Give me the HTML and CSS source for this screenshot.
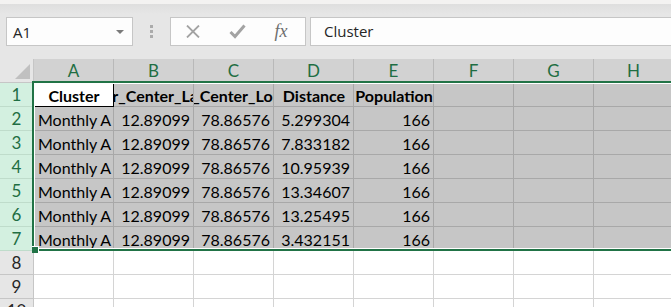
FILE: index.html
```html
<!DOCTYPE html>
<html lang="en">
<head>
    <meta charset="UTF-8">
    <meta name="viewport" content="width=device-width, initial-scale=1.0">
    <title>Cluster sheet</title>
    <link rel="stylesheet" href="styles.css">
</head>
<body>
    <div class="ribbon-edge"></div>

    <div class="formula-bar">
        <div class="name-box">
            <span>A1</span>
            <span class="drop-arrow"></span>
        </div>
        <div class="grip">
            <span></span><span></span><span></span>
        </div>
        <div class="fx-buttons">
            <span class="fx-slot">
                <svg width="14" height="13" viewBox="0 0 14 13"><path d="M1 0.5 L13 12.5 M13 0.5 L1 12.5" stroke="#a3a3a3" stroke-width="1.8" fill="none"/></svg>
            </span>
            <span class="fx-slot">
                <svg width="17" height="15" viewBox="0 0 17 15"><path d="M1.5 8 L6 12.5 L15.5 1.5" stroke="#a3a3a3" stroke-width="3" fill="none"/></svg>
            </span>
            <span class="fx-slot fx-text">fx</span>
        </div>
        <div class="formula-input">Cluster</div>
    </div>

    <div class="sheet">
        <div class="corner"><span class="corner-tri"></span></div>
        <div class="col-head">A</div>
        <div class="col-head">B</div>
        <div class="col-head">C</div>
        <div class="col-head">D</div>
        <div class="col-head">E</div>
        <div class="col-head">F</div>
        <div class="col-head">G</div>
        <div class="col-head">H</div>

        <div class="row-head sel">1</div>
        <div class="cell active head-cell"><span>Cluster</span></div>
        <div class="cell sel head-cell"><span>Cluster_Center_Latitude</span></div>
        <div class="cell sel head-cell"><span>Cluster_Center_Longitude</span></div>
        <div class="cell sel head-cell"><span>Distance</span></div>
        <div class="cell sel head-cell"><span>Population</span></div>
        <div class="cell sel"></div>
        <div class="cell sel"></div>
        <div class="cell sel"></div>

        <div class="row-head sel">2</div>
        <div class="cell sel">Monthly A</div>
        <div class="cell sel num">12.89099</div>
        <div class="cell sel num">78.86576</div>
        <div class="cell sel num">5.299304</div>
        <div class="cell sel num">166</div>
        <div class="cell sel"></div>
        <div class="cell sel"></div>
        <div class="cell sel"></div>

        <div class="row-head sel">3</div>
        <div class="cell sel">Monthly A</div>
        <div class="cell sel num">12.89099</div>
        <div class="cell sel num">78.86576</div>
        <div class="cell sel num">7.833182</div>
        <div class="cell sel num">166</div>
        <div class="cell sel"></div>
        <div class="cell sel"></div>
        <div class="cell sel"></div>

        <div class="row-head sel">4</div>
        <div class="cell sel">Monthly A</div>
        <div class="cell sel num">12.89099</div>
        <div class="cell sel num">78.86576</div>
        <div class="cell sel num">10.95939</div>
        <div class="cell sel num">166</div>
        <div class="cell sel"></div>
        <div class="cell sel"></div>
        <div class="cell sel"></div>

        <div class="row-head sel">5</div>
        <div class="cell sel">Monthly A</div>
        <div class="cell sel num">12.89099</div>
        <div class="cell sel num">78.86576</div>
        <div class="cell sel num">13.34607</div>
        <div class="cell sel num">166</div>
        <div class="cell sel"></div>
        <div class="cell sel"></div>
        <div class="cell sel"></div>

        <div class="row-head sel">6</div>
        <div class="cell sel">Monthly A</div>
        <div class="cell sel num">12.89099</div>
        <div class="cell sel num">78.86576</div>
        <div class="cell sel num">13.25495</div>
        <div class="cell sel num">166</div>
        <div class="cell sel"></div>
        <div class="cell sel"></div>
        <div class="cell sel"></div>

        <div class="row-head sel">7</div>
        <div class="cell sel">Monthly A</div>
        <div class="cell sel num">12.89099</div>
        <div class="cell sel num">78.86576</div>
        <div class="cell sel num">3.432151</div>
        <div class="cell sel num">166</div>
        <div class="cell sel"></div>
        <div class="cell sel"></div>
        <div class="cell sel"></div>

        <div class="row-head">8</div>
        <div class="cell"></div><div class="cell"></div><div class="cell"></div><div class="cell"></div>
        <div class="cell"></div><div class="cell"></div><div class="cell"></div><div class="cell"></div>

        <div class="row-head">9</div>
        <div class="cell"></div><div class="cell"></div><div class="cell"></div><div class="cell"></div>
        <div class="cell"></div><div class="cell"></div><div class="cell"></div><div class="cell"></div>

        <div class="row-head">10</div>
        <div class="cell"></div><div class="cell"></div><div class="cell"></div><div class="cell"></div>
        <div class="cell"></div><div class="cell"></div><div class="cell"></div><div class="cell"></div>

        <!-- selection frame lies over the cells -->
        <div class="selection">
            <span class="fill-handle"></span>
        </div>
    </div>
</body>
</html>
```

FILE: styles.css
```css
body {
    margin: 0;
    width: 671px;
    height: 307px;
    overflow: hidden;
    background-color: #ffffff;
    font-family: Lato, "Liberation Sans", sans-serif;
}

.ribbon-edge {
    height: 4px;
    background-color: #f3f2f1;
}

.formula-bar {
    height: 55px;
    box-sizing: border-box;
    padding-top: 13px;
    display: flex;
    align-items: flex-start;
    background: linear-gradient(#dedede, #e6e6e6 10px);
    font-family: "Open Sans", "Noto Sans", sans-serif;
}

.name-box {
    margin-left: 6px;
    width: 127px;
    height: 29px;
    box-sizing: border-box;
    border: 1px solid #c6c6c6;
    background-color: #fdfdfd;
    display: flex;
    align-items: center;
    justify-content: space-between;
    padding: 0 8px 0 6px;
    font-size: 15px;
    color: #262626;
}

.drop-arrow {
    width: 0;
    height: 0;
    border-left: 4px solid transparent;
    border-right: 4px solid transparent;
    border-top: 4px solid #7a7a7a;
}

.grip {
    width: 37px;
    height: 29px;
    display: flex;
    flex-direction: column;
    align-items: center;
    justify-content: center;
    gap: 2px;
}

.grip span {
    width: 3px;
    height: 3px;
    background-color: #ababab;
}

.fx-buttons {
    width: 136px;
    height: 29px;
    box-sizing: border-box;
    border: 1px solid #c6c6c6;
    background-color: #fdfdfd;
    display: flex;
    align-items: center;
}

.fx-slot {
    width: 44px;
    display: flex;
    justify-content: center;
    align-items: center;
}

.fx-text {
    font-family: "Liberation Serif", serif;
    font-style: italic;
    font-size: 18px;
    color: #6e6e6e;
}

.formula-input {
    flex: 1;
    margin-left: 4px;
    margin-right: -2px;
    height: 29px;
    box-sizing: border-box;
    border: 1px solid #c6c6c6;
    background-color: #fdfdfd;
    padding-left: 13px;
    font-size: 15px;
    line-height: 27px;
    color: #262626;
}

.sheet {
    position: relative;
    display: grid;
    grid-template-columns: 34px repeat(8, 80px);
    grid-template-rows: 24px repeat(10, 24px);
    font-size: 16px;
    color: #000000;
}

.corner {
    position: relative;
    background-color: #e6e6e6;
    border-right: 1px solid #c6c6c6;
    border-bottom: 1px solid #c6c6c6;
    box-sizing: border-box;
}

.corner-tri {
    position: absolute;
    right: 3px;
    bottom: 3px;
    width: 0;
    height: 0;
    border-left: 15px solid transparent;
    border-bottom: 15px solid #c0c0c0;
}

.col-head {
    background-color: #d2d2d2;
    color: #1f6e43;
    border-right: 1px solid #b9b9b9;
    border-bottom: 1px solid #9f9f9f;
    box-sizing: border-box;
    text-align: center;
    line-height: 23px;
    font-size: 17px;
}

.row-head {
    background-color: #e6e6e6;
    color: #262626;
    border-right: 1px solid #c6c6c6;
    border-bottom: 1px solid #c6c6c6;
    box-sizing: border-box;
    text-align: center;
    line-height: 24px;
    font-size: 17px;
}

.row-head.sel {
    background-color: #d3f0e0;
    color: #1f6e43;
    border-bottom-color: #bfdccb;
}

.cell {
    display: flex;
    align-items: center;
    justify-content: flex-start;
    overflow: hidden;
    white-space: nowrap;
    padding: 1px 3px 0 4px;
    box-sizing: border-box;
    border-right: 1px solid #d4d4d4;
    border-bottom: 1px solid #d4d4d4;
}

.cell.sel {
    background-color: #c6c6c6;
    border-color: #a8a8a8;
}

.cell.active {
    background-color: #ffffff;
}

.num {
    justify-content: flex-end;
}

.head-cell {
    justify-content: center;
    font-weight: bold;
    border-right-color: #000000;
    border-bottom-color: #000000;
}

.head-cell span {
    flex-shrink: 0;
}

.selection {
    position: absolute;
    left: 32px;
    top: 22px;
    right: -10px;
    height: 170px;
    border: 2px solid #217346;
    box-shadow: inset 0 0 0 1px #ffffff;
    box-sizing: border-box;
    pointer-events: none;
}

.fill-handle {
    position: absolute;
    left: -2px;
    bottom: -4px;
    width: 6px;
    height: 6px;
    background-color: #217346;
    border-top: 1px solid #ffffff;
    border-right: 1px solid #ffffff;
}
```
